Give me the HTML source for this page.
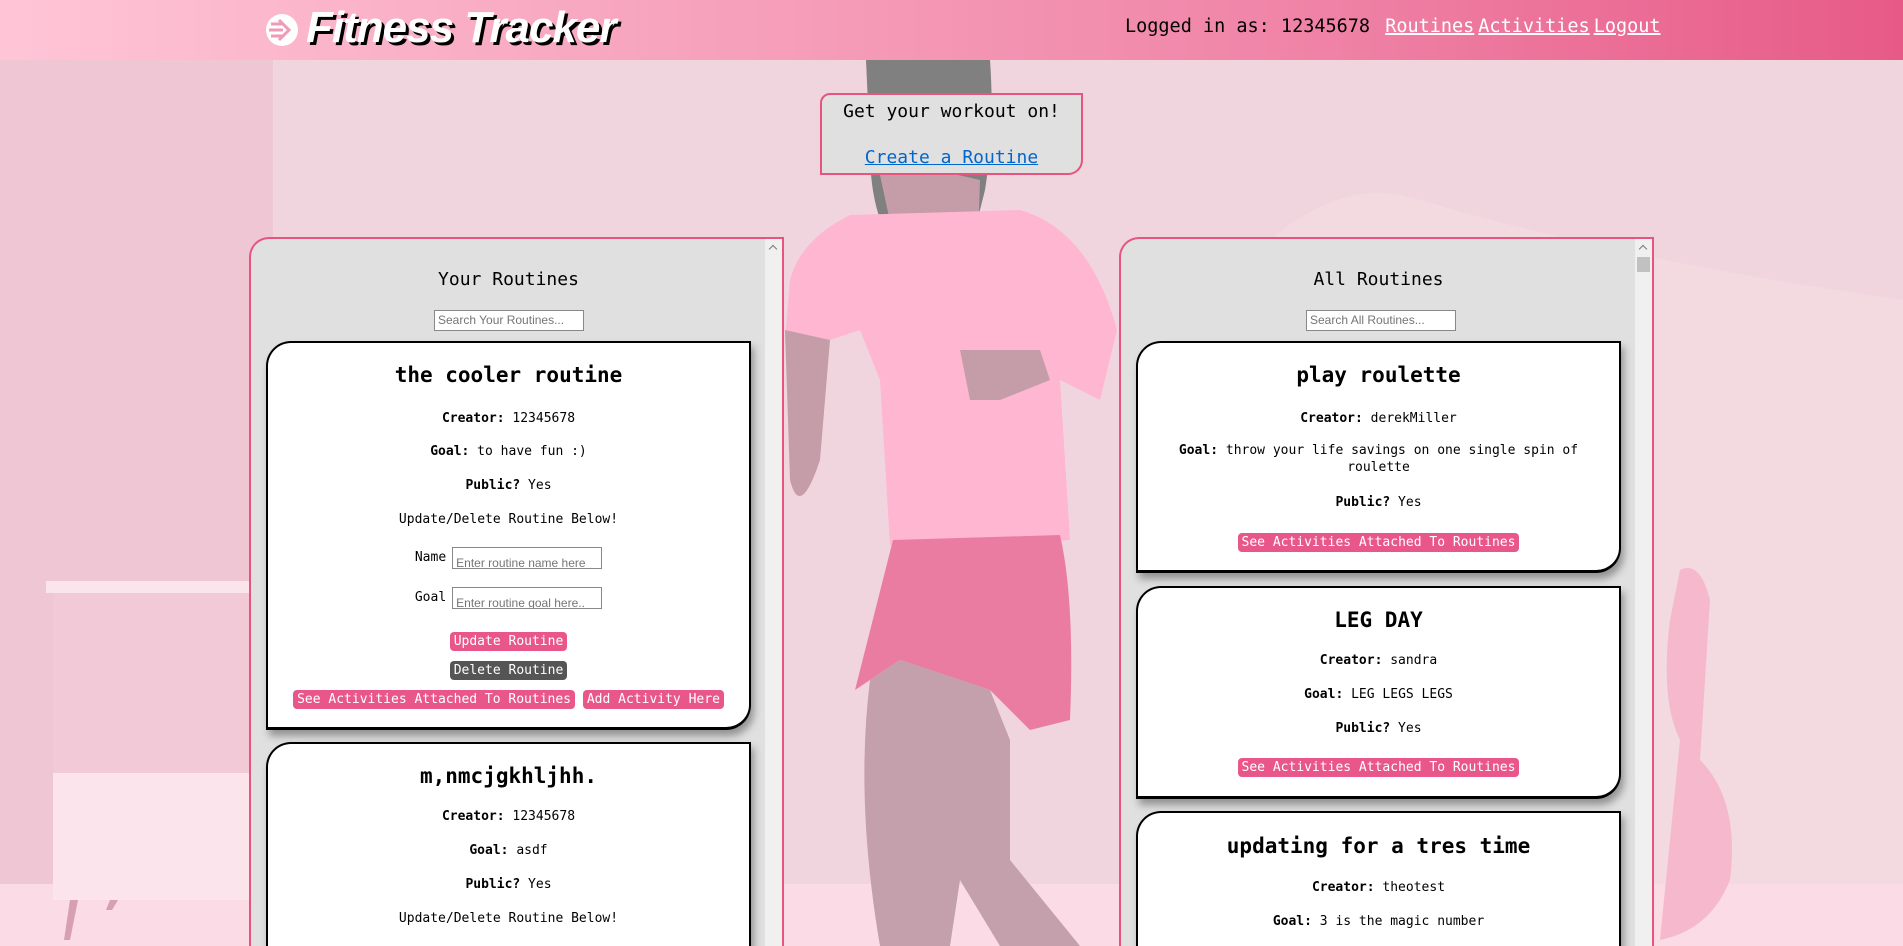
<!DOCTYPE html>
<html><head><meta charset="utf-8"><style>
*{box-sizing:border-box}
body{margin:0;width:1903px;height:946px;overflow:hidden;background:#f1d5de;font-family:"DejaVu Sans Mono","Liberation Mono",monospace;position:relative}
.bg{position:absolute;left:0;top:0}
header{position:absolute;left:0;top:0;width:1903px;height:60px;background:linear-gradient(90deg,#ffc5d7 0%,#f7a4be 35%,#ef82a6 70%,#e75a88 100%)}
.logo{position:absolute;left:306px;top:3px;font-family:"Liberation Sans",sans-serif;font-weight:bold;font-style:italic;font-size:44px;color:#fff;text-shadow:3px 3px 0 #000;letter-spacing:-1px}
.nav{position:absolute;left:1125px;top:16px;font-size:18.5px;color:#000;white-space:nowrap}
.nav a{color:#fff;text-decoration:underline;text-decoration-thickness:2px;margin-left:4px}
.cta{position:absolute;left:820px;top:93px;width:263px;height:82px;background:#e0e0e0;border:2px solid #e75480;border-radius:10px 0 15px 0;text-align:center;font-size:18px}
.cta .t{position:absolute;top:6px;width:100%}
.cta a{position:absolute;top:52px;left:0;width:100%;color:#0066cc;text-decoration:underline}
.panel{position:absolute;top:237px;width:535px;height:709px;background:#e0e0e0;border:2px solid #e75480;border-bottom:none;border-radius:20px 0 0 0;overflow:hidden}
.sb{position:absolute;right:0;top:0;width:17px;height:100%;background:#f0f0f0}
.sb:before{content:"";position:absolute;left:5px;top:7px;width:5px;height:5px;border-left:1.5px solid #777;border-top:1.5px solid #777;transform:rotate(45deg)}
.ph{position:absolute;top:30px;left:0;width:515px;text-align:center;font-size:18px}
.search{position:absolute;top:71px;width:150px;height:21px;background:#fff;border:1px solid #888;font-family:"Liberation Sans",sans-serif;font-size:12px;color:#757575;padding:2px 3px;white-space:nowrap;overflow:hidden}
.card{position:absolute;left:15px;width:485px;background:#fff;border:2px solid #000;border-bottom-width:3px;border-radius:25px 0 25px 0;box-shadow:3px 6px 8px rgba(0,0,0,.35);text-align:center;font-size:13px}
.card h2{position:absolute;left:0;width:100%;margin:0;font-size:21px;font-weight:bold}
.card .l{position:absolute;left:0;width:100%;line-height:17px}
.btn{display:inline-block;background:#e9578a;color:#fff;border-radius:4px;padding:1px 4px;line-height:17px;font-size:13px}
.dk{background:#555}
.inp{display:inline-block;width:150px;height:22px;border:1px solid #888;font-family:"Liberation Sans",sans-serif;font-size:12px;color:#757575;text-align:left;padding:3px 3px;vertical-align:middle;margin-left:6px;white-space:nowrap;overflow:hidden}
</style></head><body>
<svg class="bg" width="1903" height="946" viewBox="0 0 1903 946">
<rect x="0" y="60" width="273" height="886" fill="#efc6d3"/>
<path d="M1240 270 Q1330 170 1420 200 Q1620 260 1903 300 L1903 946 L1240 946 Z" fill="#f3dbe3" opacity=".7"/>
<rect x="0" y="884" width="1903" height="62" fill="#fbdbe5"/>
<rect x="46" y="581" width="227" height="12" fill="#fbe5ec"/>
<rect x="53" y="593" width="220" height="180" fill="#f2c9d6"/>
<rect x="53" y="773" width="220" height="127" fill="#fbe4ec"/>
<path d="M70 900 L78 900 L70 940 L64 940 Z M110 900 L118 900 L112 910 L106 910 Z" fill="#d6a0b2"/>
<path d="M1680 570 Q1700 560 1710 600 L1700 760 Q1740 800 1730 880 Q1710 930 1660 940 L1680 740 Q1660 700 1670 620 Z" fill="#f6b8cc"/>
<path d="M866 60 L990 60 Q995 130 985 190 L970 250 L900 255 Q870 220 870 150 Z" fill="#808080"/>
<path d="M880 175 Q900 160 980 180 L978 240 Q940 260 895 245 Z" fill="#c49da8"/>
<path d="M790 280 Q800 240 850 215 L1020 210 Q1090 230 1117 330 L1100 400 L1060 380 L1070 540 Q960 550 890 545 L880 380 L860 330 L830 340 Q815 380 795 420 L785 340 Z" fill="#ffb6d0"/>
<path d="M785 330 L830 340 L820 460 Q800 520 790 480 Z" fill="#c49da8"/>
<path d="M960 350 L1040 350 L1050 380 L1000 400 L970 400 Z" fill="#c49da8"/>
<path d="M893 540 L1060 535 Q1075 600 1070 720 L1030 730 L990 690 L900 660 L855 690 Z" fill="#ea7ca2"/>
<path d="M870 680 L900 660 L990 690 L1010 740 L1010 860 L1080 946 L1000 946 L960 880 L950 946 L880 946 Q855 800 870 680 Z" fill="#c49fac"/>
</svg>
<header>
<svg style="position:absolute;left:265px;top:12px" width="34" height="36" viewBox="0 0 34 36"><circle cx="17" cy="18" r="16" fill="#fff"/><path d="M6 12h12M4 18h14M6 24h12" stroke="#f09ab6" stroke-width="3"/><path d="M14 8 L24 18 L14 28" stroke="#f09ab6" stroke-width="3" fill="none"/></svg>
<div class="logo">Fitness Tracker</div>
<div class="nav">Logged in as: 12345678 <a>Routines</a><a>Activities</a><a>Logout</a></div>
</header>
<div class="cta"><div class="t">Get your workout on!</div><a>Create a Routine</a></div>

<div class="panel" style="left:249px">
<div class="sb"></div>
<div class="ph">Your Routines</div>
<div class="search" style="left:183px">Search Your Routines...</div>
<div class="card" style="top:102px;height:389px">
<h2 style="top:20px">the cooler routine</h2>
<div class="l" style="top:67px"><b>Creator:</b> 12345678</div>
<div class="l" style="top:100px"><b>Goal:</b> to have fun :)</div>
<div class="l" style="top:134px"><b>Public?</b> Yes</div>
<div class="l" style="top:168px">Update/Delete Routine Below!</div>
<div class="l" style="top:203px;line-height:24px">Name<span class="inp">Enter routine name here</span></div>
<div class="l" style="top:243px;line-height:24px">Goal<span class="inp">Enter routine goal here..</span></div>
<div class="l" style="top:289px"><span class="btn">Update Routine</span></div>
<div class="l" style="top:318px"><span class="btn dk">Delete Routine</span></div>
<div class="l" style="top:347px"><span class="btn">See Activities Attached To Routines</span> <span class="btn">Add Activity Here</span></div>
</div>
<div class="card" style="top:503px;height:300px">
<h2 style="top:20px">m,nmcjgkhljhh.</h2>
<div class="l" style="top:64px"><b>Creator:</b> 12345678</div>
<div class="l" style="top:98px"><b>Goal:</b> asdf</div>
<div class="l" style="top:132px"><b>Public?</b> Yes</div>
<div class="l" style="top:166px">Update/Delete Routine Below!</div>
</div>
</div>

<div class="panel" style="left:1119px">
<div class="sb"><div style="position:absolute;left:2px;top:18px;width:13px;height:15px;background:#c1c1c1"></div></div>
<div class="ph">All Routines</div>
<div class="search" style="left:185px">Search All Routines...</div>
<div class="card" style="top:102px;height:232px">
<h2 style="top:20px">play roulette</h2>
<div class="l" style="top:67px"><b>Creator:</b> derekMiller</div>
<div class="l" style="top:99px;padding:0 18px"><b>Goal:</b> throw your life savings on one single spin of roulette</div>
<div class="l" style="top:151px"><b>Public?</b> Yes</div>
<div class="l" style="top:190px"><span class="btn">See Activities Attached To Routines</span></div>
</div>
<div class="card" style="top:347px;height:213px">
<h2 style="top:20px">LEG DAY</h2>
<div class="l" style="top:64px"><b>Creator:</b> sandra</div>
<div class="l" style="top:98px"><b>Goal:</b> LEG LEGS LEGS</div>
<div class="l" style="top:132px"><b>Public?</b> Yes</div>
<div class="l" style="top:170px"><span class="btn">See Activities Attached To Routines</span></div>
</div>
<div class="card" style="top:572px;height:200px">
<h2 style="top:21px">updating for a tres time</h2>
<div class="l" style="top:66px"><b>Creator:</b> theotest</div>
<div class="l" style="top:100px"><b>Goal:</b> 3 is the magic number</div>
</div>
</div>
</body></html>
